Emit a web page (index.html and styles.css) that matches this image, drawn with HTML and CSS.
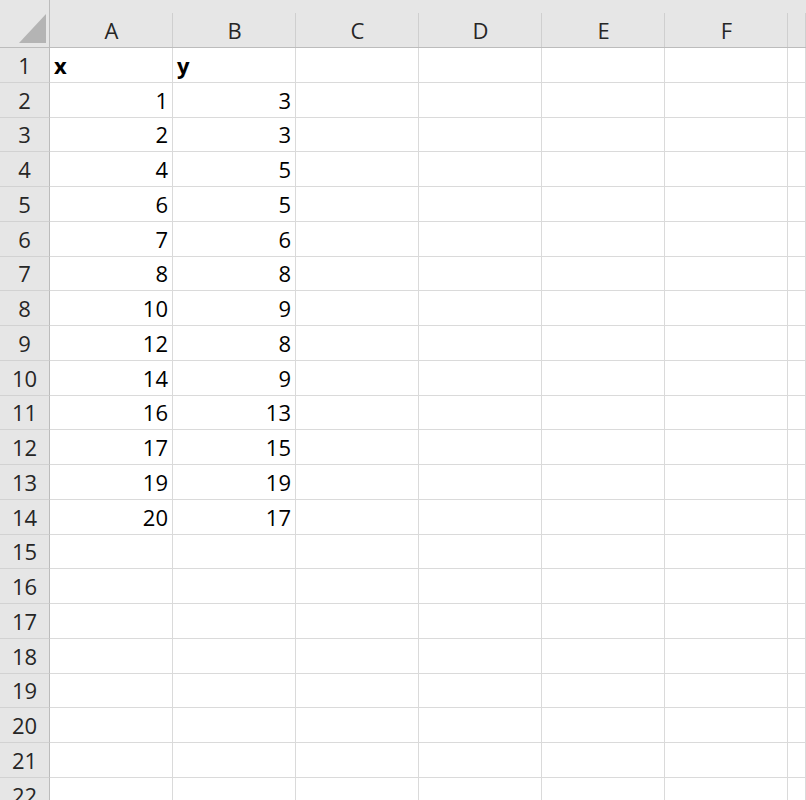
FILE: index.html
```html
<!DOCTYPE html>
<html lang="en">

<head>
  <meta charset="UTF-8">
  <meta name="viewport" content="width=device-width, initial-scale=1.0">
  <title>Sheet1</title>
  <link rel="stylesheet" href="styles.css">
</head>

<body>
  <table class="sheet">
    <colgroup>
      <col class="col-rowhead">
      <col class="col-cell">
      <col class="col-cell">
      <col class="col-cell">
      <col class="col-cell">
      <col class="col-cell">
      <col class="col-cell">
      <col class="col-last">
    </colgroup>
    <thead>
      <tr>
        <th class="corner"><div class="corner-mark"></div></th>
        <th class="colhead">A</th>
        <th class="colhead">B</th>
        <th class="colhead">C</th>
        <th class="colhead">D</th>
        <th class="colhead">E</th>
        <th class="colhead">F</th>
        <th class="colhead"></th>
      </tr>
    </thead>
    <tbody id="sheet-body">
      <!-- rows are filled in below -->
    </tbody>
  </table>

  <script>
    // x / y sample data, row 1 is the header
    const data = [
      ['x', 'y'],
      [1, 3], [2, 3], [4, 5], [6, 5], [7, 6], [8, 8], [10, 9],
      [12, 8], [14, 9], [16, 13], [17, 15], [19, 19], [20, 17]
    ];
    const totalRows = 22;
    const totalCols = 7;

    const body = document.getElementById('sheet-body');
    for (let r = 0; r < totalRows; r++) {
      const tr = document.createElement('tr');
      const head = document.createElement('th');
      head.className = 'rowhead';
      head.textContent = r + 1;
      tr.appendChild(head);

      for (let c = 0; c < totalCols; c++) {
        const td = document.createElement('td');
        const value = data[r] ? data[r][c] : undefined;
        if (value !== undefined) {
          td.textContent = value;
          td.classList.add(typeof value === 'number' ? 'num' : 'label');
        }
        tr.appendChild(td);
      }
      body.appendChild(tr);
    }
  </script>
</body>

</html>
```

FILE: styles.css
```css
html, body {
  margin: 0;
  padding: 0;
  background-color: #ffffff;
  overflow: hidden;
}

.sheet {
  border-collapse: separate;
  border-spacing: 0;
  table-layout: fixed;
  width: 806px;
  font-family: "Open Sans", "Noto Sans", sans-serif;
  font-size: 22px;
  color: #000;
}

.col-rowhead {
  width: 50px;
}

.col-cell {
  width: 123px;
}

.col-last {
  width: 18px;
}

.sheet th,
.sheet td {
  padding: 0;
  box-sizing: border-box;
  white-space: nowrap;
  overflow: hidden;
  line-height: 28px;
}

/* column letters */
.sheet thead th {
  height: 48px;
  background-color: #e6e6e6;
  border-bottom: 1px solid #bcbcbc;
  font-weight: normal;
  color: #262626;
  padding-bottom: 3px;
  text-align: center;
  vertical-align: bottom;
  position: relative;
}

/* short divider between column letters */
.sheet thead th.colhead::after {
  content: "";
  position: absolute;
  top: 13px;
  right: 0;
  bottom: 0;
  width: 1px;
  background-color: #cfcfcf;
}

.sheet thead th.corner {
  border-right: 1px solid #bcbcbc;
}

.corner-mark {
  position: absolute;
  right: 3px;
  bottom: 4px;
  width: 0;
  height: 0;
  border-left: 27px solid transparent;
  border-bottom: 29px solid #b4b4b4;
}

/* row numbers */
.sheet .rowhead {
  height: 34.76px;
  background-color: #e6e6e6;
  border-right: 1px solid #bcbcbc;
  border-bottom: 1px solid #d2d2d2;
  font-weight: normal;
  color: #262626;
  text-align: center;
  vertical-align: bottom;
  padding-bottom: 3px;
}

.sheet td {
  height: 34.76px;
  border-right: 1px solid #dadada;
  border-bottom: 1px solid #dadada;
  vertical-align: bottom;
  padding-bottom: 3px;
}

.sheet td.num {
  text-align: right;
  padding-right: 4px;
}

.sheet td.label {
  text-align: left;
  padding-left: 4px;
  font-weight: bold;
}
```
